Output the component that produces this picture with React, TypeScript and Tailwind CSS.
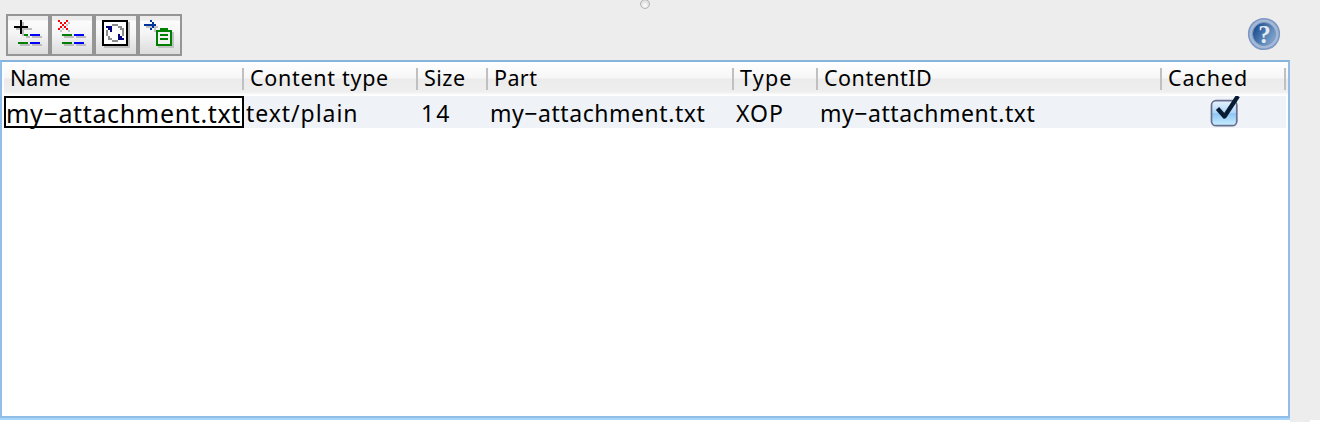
import React from "react";

const columns = [
  { title: "Name", width: "w-[240px]", track: "tracking-[0px]" },
  { title: "Content type", width: "w-[174px]", track: "tracking-[0.7px]" },
  { title: "Size", width: "w-[70px]", track: "tracking-[0.5px]" },
  { title: "Part", width: "w-[246px]", track: "tracking-[0.4px]" },
  { title: "Type", width: "w-[84px]", track: "tracking-[1.2px]" },
  { title: "ContentID", width: "w-[344px]", track: "tracking-[0.5px]" },
  { title: "Cached", width: "w-[124px]", track: "tracking-[0.9px]" },
];

function ToolButton({ children }: { children: React.ReactNode }) {
  return (
    <button className="h-[42px] w-[44px] border-2 border-[#959595] bg-[linear-gradient(#ececec_0px,#ececec_4px,#fcfcfc_5px,#f4f4f4_18px,#dcdcdc_38px)]">
      <svg width="40" height="38" viewBox="0 0 40 38" shapeRendering="crispEdges" fill="none">
        {children}
      </svg>
    </button>
  );
}

function Bars({ short }: { short?: boolean }) {
  const x = short ? 16 : 10;
  return (
    <>
      <path fill="#bdbdbd" d={`M${x + 2} 20H22v2H${x + 2}zM24 20h10v2H24zM12 28h10v2H12zM24 28h10v2H24z`} />
      <path fill="#008000" d={`M${x} 18H20v2H${x}zM10 26h10v2H10z`} />
      <path fill="#0000ff" d="M22 18h10v2H22zM22 26h10v2H22z" />
    </>
  );
}

const cross = "M0 0h2v2H0zM8 0h2v2H8zM2 2h2v2H2zM6 2h2v2H6zM4 4h2v2H4zM2 6h2v2H2zM6 6h2v2H6zM0 8h2v2H0zM8 8h2v2H8z";

export default function App() {
  return (
    <div className="flex h-[422px] w-[1320px] flex-col overflow-hidden bg-white font-['Noto_Sans',sans-serif] text-black">
      <div className="relative flex h-[60px] items-start justify-between bg-[#ededed] pl-[6px] pr-[39px] pt-[14px]">
        <div className="flex">
          <ToolButton>
            <path fill="#bdbdbd" d="M14 6h2v14h-2zM8 12h16v2H8z" />
            <Bars short />
            <path fill="#000" d="M12 4h2v14h-2zM6 10h14v2H6z" />
          </ToolButton>
          <ToolButton>
            <g transform="translate(8 6)"><path fill="#c4c4c4" d={cross} /></g>
            <g transform="translate(6 4)"><path fill="#ff0000" d={cross} /></g>
            <Bars />
          </ToolButton>
          <ToolButton>
            <path fill="#bdbdbd" d="M8 6h26v26H8z" />
            <path fill="#000" d="M6 4h26v26H6z" />
            <path fill="#fff" d="M8 6h22v22H8z" />
            <path fill="#8c8c8c" d="M16 8h6v2h-6zM22 10h4v2h-4zM24 12h4v2h-4zM26 14h2v6h-2zM10 14h2v6h-2zM12 20h2v2h-2zM12 22h4v2h-4zM16 24h6v2h-6z" />
            <path fill="#000080" d="M10 10h6v6h-2v-2h-2v-2h-2zM22 18h2v2h2v2h2v2h-6z" />
          </ToolButton>
          <ToolButton>
            <path fill="#c2c2c2" d="M6 10h12v2H6zM14 12h2v4h-2zM32 16h2v16H18v-2h14z" />
            <path fill="#003399" d="M4 8h12v2H4zM10 4h2v2h-2zM12 6h2v6h-2zM10 12h2v2h-2z" />
            <path fill="#008000" d="M16 14h4v-2h8v2h4v16H16z" />
            <path fill="#f2f2f2" d="M18 16h12v12H18z" />
            <path fill="#008000" d="M20 18h8v2h-8zM20 22h8v2h-8z" />
          </ToolButton>
        </div>
        <svg className="mt-[3px]" width="34" height="34" viewBox="0 0 34 34">
          <defs>
            <linearGradient id="help" x1="0" y1="0" x2="1" y2="0.6">
              <stop offset="0.2" stopColor="#235293" />
              <stop offset="1" stopColor="#7ba4cd" />
            </linearGradient>
          </defs>
          <circle cx="17" cy="17" r="15.3" fill="#a5b9d7" stroke="#7c98c2" strokeWidth="1.6" />
          <circle cx="17" cy="17" r="11.5" fill="url(#help)" stroke="#7895c0" />
          <text x="17.5" y="26" textAnchor="middle" fontSize="25" fontWeight="700" fill="#e4eaf2" fontFamily="Liberation Serif">?</text>
        </svg>
        <div className="absolute left-[640px] top-[-1px] size-[10px] rounded-full border border-[#b4b4b4] bg-[radial-gradient(circle_at_50%_65%,#fff,#ccc)]" />
      </div>
      <div className="flex h-[360px] shrink-0 bg-[#ededed]">
        <div className="flex w-[1290px] flex-col border-b-2 border-[#a8d5fb]">
          <div className="h-[358px] border-2 border-[#8fbfe8] border-t-[#86b4dc] bg-white pl-[2px]">
            <div className="flex h-[34px] w-[1284px] bg-[linear-gradient(#fff_0px,#f7f7f7_16px,#ebebeb_17px,#efefef_30px,#fff_33px)] pt-[6px]">
              {columns.map((c) => (
                <div key={c.title} className={`${c.width} h-[22px] shrink-0 border-r-2 border-[#c0c0c0] pl-[6px]`}>
                  <div className={`${c.track} whitespace-nowrap text-[21.5px] leading-[19px]`}>{c.title}</div>
                </div>
              ))}
            </div>
            <div className="flex h-[32px] w-[1282px] bg-[#eff3f7] text-[23px] leading-[35px] whitespace-nowrap">
              <div className="flex w-[240px] justify-end border-2 border-black bg-white pr-[1px] text-[25px] leading-[31px] tracking-[0.65px]">my−attachment.txt</div>
              <div className="w-[174px] pl-[2px] tracking-[0.95px]">text/plain</div>
              <div className="w-[70px] pl-[3px] tracking-[2px]">14</div>
              <div className="w-[246px] pl-[2px] tracking-[0.55px]">my−attachment.txt</div>
              <div className="w-[84px] pl-[2px] tracking-[1px]">XOP</div>
              <div className="w-[344px] pl-[2px] tracking-[0.55px]">my−attachment.txt</div>
              <div className="flex w-[124px] justify-center">
                <svg width="32" height="32" viewBox="0 0 32 32">
                  <defs>
                    <linearGradient id="box" x1="0" y1="0" x2="0" y2="1">
                      <stop offset="0" stopColor="#e8f3fd" />
                      <stop offset="0.48" stopColor="#aed5f8" />
                      <stop offset="0.52" stopColor="#8fc5f3" />
                      <stop offset="1" stopColor="#c9f0ff" />
                    </linearGradient>
                  </defs>
                  <rect x="3.5" y="4.7" width="25.3" height="25" rx="4.5" fill="url(#box)" stroke="#686e8e" strokeWidth="1.7" />
                  <path d="M9.5 12.5L16.5 20.5L30 0" fill="none" stroke="#071b33" strokeWidth="4.3" strokeLinejoin="round" />
                </svg>
              </div>
            </div>
          </div>
        </div>
      </div>
      <div className="ml-[1290px] h-[2px] w-[20px] bg-[#ededed]" />
    </div>
  );
}
